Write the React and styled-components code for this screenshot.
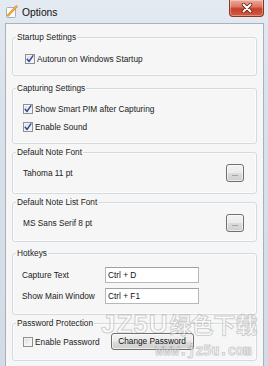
import React from 'react';
import styled, { createGlobalStyle } from 'styled-components';

const Global = createGlobalStyle`
  html, body { margin: 0; padding: 0; background: #dce4ec; }
  body { font-family: "Liberation Sans", Arial, sans-serif; }
`;

const Window = styled.div`
  position: relative;
  width: 268px;
  height: 366px;
  overflow: hidden;
  display: flex;
  flex-direction: column;
  background: linear-gradient(180deg, #e4eaf1 0%, #d9e1ea 25%, #d3dbe4 100%);
`;

const TitleBar = styled.div`
  height: 23px;
  flex: none;
  display: flex;
  align-items: flex-start;
`;

const AppIcon = styled.svg`
  margin: 5px 0 0 5px;
  width: 13px;
  height: 13px;
  flex: none;
`;

const Title = styled.div`
  margin: 6px 0 0 4px;
  font-size: 10.3px;
  line-height: 13px;
  color: #111;
`;

const CloseButton = styled.div`
  margin-left: auto;
  margin-right: 4px;
  width: 35px;
  height: 17px;
  box-sizing: border-box;
  border: 1px solid #8a3526;
  border-top: none;
  border-radius: 0 0 4px 4px;
  background: linear-gradient(180deg, #eba89a 0%, #de7b68 40%, #c8402a 55%, #d15a43 100%);
  box-shadow: inset 0 0 0 1px rgba(255, 255, 255, 0.35);
  display: flex;
  align-items: center;
  justify-content: center;
`;

const Client = styled.div`
  flex: 1;
  margin: 0 4px 0 5px;
  border: 1px solid #a9b2bc;
  border-bottom: none;
  background: #f6f6f6;
  padding: 8px 6px 0;
  display: flex;
  flex-direction: column;
`;

const Group = styled.fieldset`
  flex: none;
  min-width: 0;
  margin: ${p => p.$mt}px 0 0;
  padding: ${p => p.$pt}px ${p => p.$pr ?? 12}px 0 ${p => p.$pl}px;
  height: ${p => p.$h}px;
  box-sizing: border-box;
  border: 1px solid #d3dae2;
  border-radius: 3px;
  box-shadow: inset 0 0 0 1px rgba(255, 255, 255, 0.7);

  & > legend {
    margin-left: ${p => 3 - p.$pl}px;
  }
`;

const Legend = styled.legend`
  padding: 0 1px;
  font-size: 8.3px;
  line-height: 10px;
  color: #1a1a1a;
`;

const Rows = styled.div`
  display: flex;
  flex-direction: column;
  gap: 6px;
`;

const CheckRow = styled.label`
  display: flex;
  align-items: center;
  height: 12px;
  gap: 2px;
  font-size: 8.3px;
  color: #1a1a1a;
`;

const Box = styled.span`
  width: 10px;
  height: 10px;
  box-sizing: border-box;
  border: 1px solid #8e9091;
  background: linear-gradient(135deg, #d6d8db 0%, #f1f2f3 60%, #fbfbfb 100%);
  box-shadow: inset 0 0 0 1px #f4f4f4;
  display: flex;
  align-items: center;
  justify-content: center;
  flex: none;
`;

const FontRow = styled.div`
  display: flex;
  align-items: center;
  justify-content: space-between;
  height: 18px;
  font-size: 8.3px;
  color: #1a1a1a;
`;

const Button = styled.button`
  box-sizing: border-box;
  width: ${p => p.$w}px;
  height: ${p => p.$h}px;
  margin: 0 0 0 ${p => p.$ml || 0}px;
  padding: 0;
  border: 1px solid #707070;
  border-radius: 3px;
  background: linear-gradient(180deg, #f3f3f3 0%, #ebebeb 48%, #dcdcdc 52%, #cfcfcf 100%);
  box-shadow: inset 0 0 0 1px rgba(255, 255, 255, 0.6);
  font-family: "Liberation Sans", Arial, sans-serif;
  font-size: ${p => p.$fs}px;
  line-height: 1;
  color: #111;
  display: flex;
  align-items: center;
  justify-content: center;
  flex: none;
`;

const HotkeyGrid = styled.div`
  display: grid;
  grid-template-columns: 83px 94px;
  grid-auto-rows: 16px;
  row-gap: 5px;
  align-items: center;
  font-size: 8.3px;
  color: #1a1a1a;
`;

const Field = styled.div`
  height: 16px;
  box-sizing: border-box;
  border: 1px solid #b5b8bd;
  border-top-color: #9da1a8;
  background: #fff;
  padding-left: 2px;
  display: flex;
  align-items: center;
  font-size: 8.3px;
  color: #111;
`;

const PasswordRow = styled.div`
  display: flex;
  align-items: center;
  height: 17px;
  font-size: 8.3px;
  color: #1a1a1a;
`;

const Watermark = styled.div`
  position: absolute;
  left: 101px;
  top: 309px;
  pointer-events: none;
  display: flex;
  flex-direction: column;
  align-items: flex-start;
  color: rgba(255, 255, 255, 0.5);
  -webkit-text-stroke: 1px rgba(140, 140, 140, 0.4);
`;

const MarkMain = styled.div`
  font-family: "Liberation Sans", "Noto Sans CJK SC", sans-serif;
  font-weight: bold;
  font-size: 22px;
  line-height: 30px;
  white-space: nowrap;
`;

const MarkLatin = styled.span`
  font-size: 26px;
  letter-spacing: 1px;
  margin-right: 1px;
`;

const MarkUrl = styled.div`
  margin: 2px 0 0 54px;
  font-family: "DejaVu Sans Mono", monospace;
  font-weight: bold;
  font-size: 14px;
  line-height: 14px;
  letter-spacing: -0.4px;
  white-space: nowrap;
`;

const Check = () => (
  <svg width="8" height="8" viewBox="0 0 8 8">
    <path d="M1.2 4.2 L3.1 6.4 L6.9 0.9" fill="none" stroke="#2a4aa0" strokeWidth="1.5" strokeLinecap="round" strokeLinejoin="round" />
  </svg>
);

const CheckBox = ({ checked }) => <Box>{checked && <Check />}</Box>;

export default function App() {
  return (
    <>
      <Global />
      <Window>
        <TitleBar>
          <AppIcon viewBox="0 0 13 13">
            <rect x="1.5" y="2.5" width="9" height="10" rx="1" fill="#fbfbfb" stroke="#a8aeb5" />
            <path d="M3 10.5 L11.5 1.5" stroke="#e58a1f" strokeWidth="2.4" strokeLinecap="round" />
            <path d="M3 10.5 L11.5 1.5" stroke="#f7c65a" strokeWidth="0.9" strokeLinecap="round" />
          </AppIcon>
          <Title>Options</Title>
          <CloseButton>
            <svg width="12" height="10" viewBox="0 0 12 10">
              <path d="M2.5 1.5 L9.5 8.5 M9.5 1.5 L2.5 8.5" stroke="#5d2015" strokeWidth="3.6" strokeLinecap="round" />
              <path d="M2.5 1.5 L9.5 8.5 M9.5 1.5 L2.5 8.5" stroke="#ffffff" strokeWidth="2" strokeLinecap="round" />
            </svg>
          </CloseButton>
        </TitleBar>
        <Client>
          <Group $mt={0} $h={44} $pt={11} $pl={12}>
            <Legend>Startup Settings</Legend>
            <CheckRow><CheckBox checked />Autorun on Windows Startup</CheckRow>
          </Group>
          <Group $mt={7} $h={61} $pt={10} $pl={10}>
            <Legend>Capturing Settings</Legend>
            <Rows>
              <CheckRow><CheckBox checked />Show Smart PIM after Capturing</CheckRow>
              <CheckRow><CheckBox checked />Enable Sound</CheckRow>
            </Rows>
          </Group>
          <Group $mt={3} $h={47} $pt={7} $pl={10}>
            <Legend>Default Note Font</Legend>
            <FontRow>
              <span>Tahoma 11 pt</span>
              <Button $w={18} $h={18} $fs={7}>...</Button>
            </FontRow>
          </Group>
          <Group $mt={3} $h={45} $pt={7} $pl={10}>
            <Legend>Default Note List Font</Legend>
            <FontRow>
              <span>MS Sans Serif 8 pt</span>
              <Button $w={18} $h={18} $fs={7}>...</Button>
            </FontRow>
          </Group>
          <Group $mt={6} $h={67} $pt={9} $pl={9}>
            <Legend>Hotkeys</Legend>
            <HotkeyGrid>
              <span>Capture Text</span>
              <Field>Ctrl + D</Field>
              <span>Show Main Window</span>
              <Field>Ctrl + F1</Field>
            </HotkeyGrid>
          </Group>
          <Group $mt={3} $h={43} $pt={5} $pl={10}>
            <Legend>Password Protection</Legend>
            <PasswordRow>
              <CheckRow><CheckBox />Enable Password</CheckRow>
              <Button $w={83} $h={17} $fs={8.3} $ml={11}>Change Password</Button>
            </PasswordRow>
          </Group>
        </Client>
        <Watermark>
          <MarkMain><MarkLatin>JZ5U</MarkLatin>绿色下载</MarkMain>
          <MarkUrl>www.jz5u.com</MarkUrl>
        </Watermark>
      </Window>
    </>
  );
}
